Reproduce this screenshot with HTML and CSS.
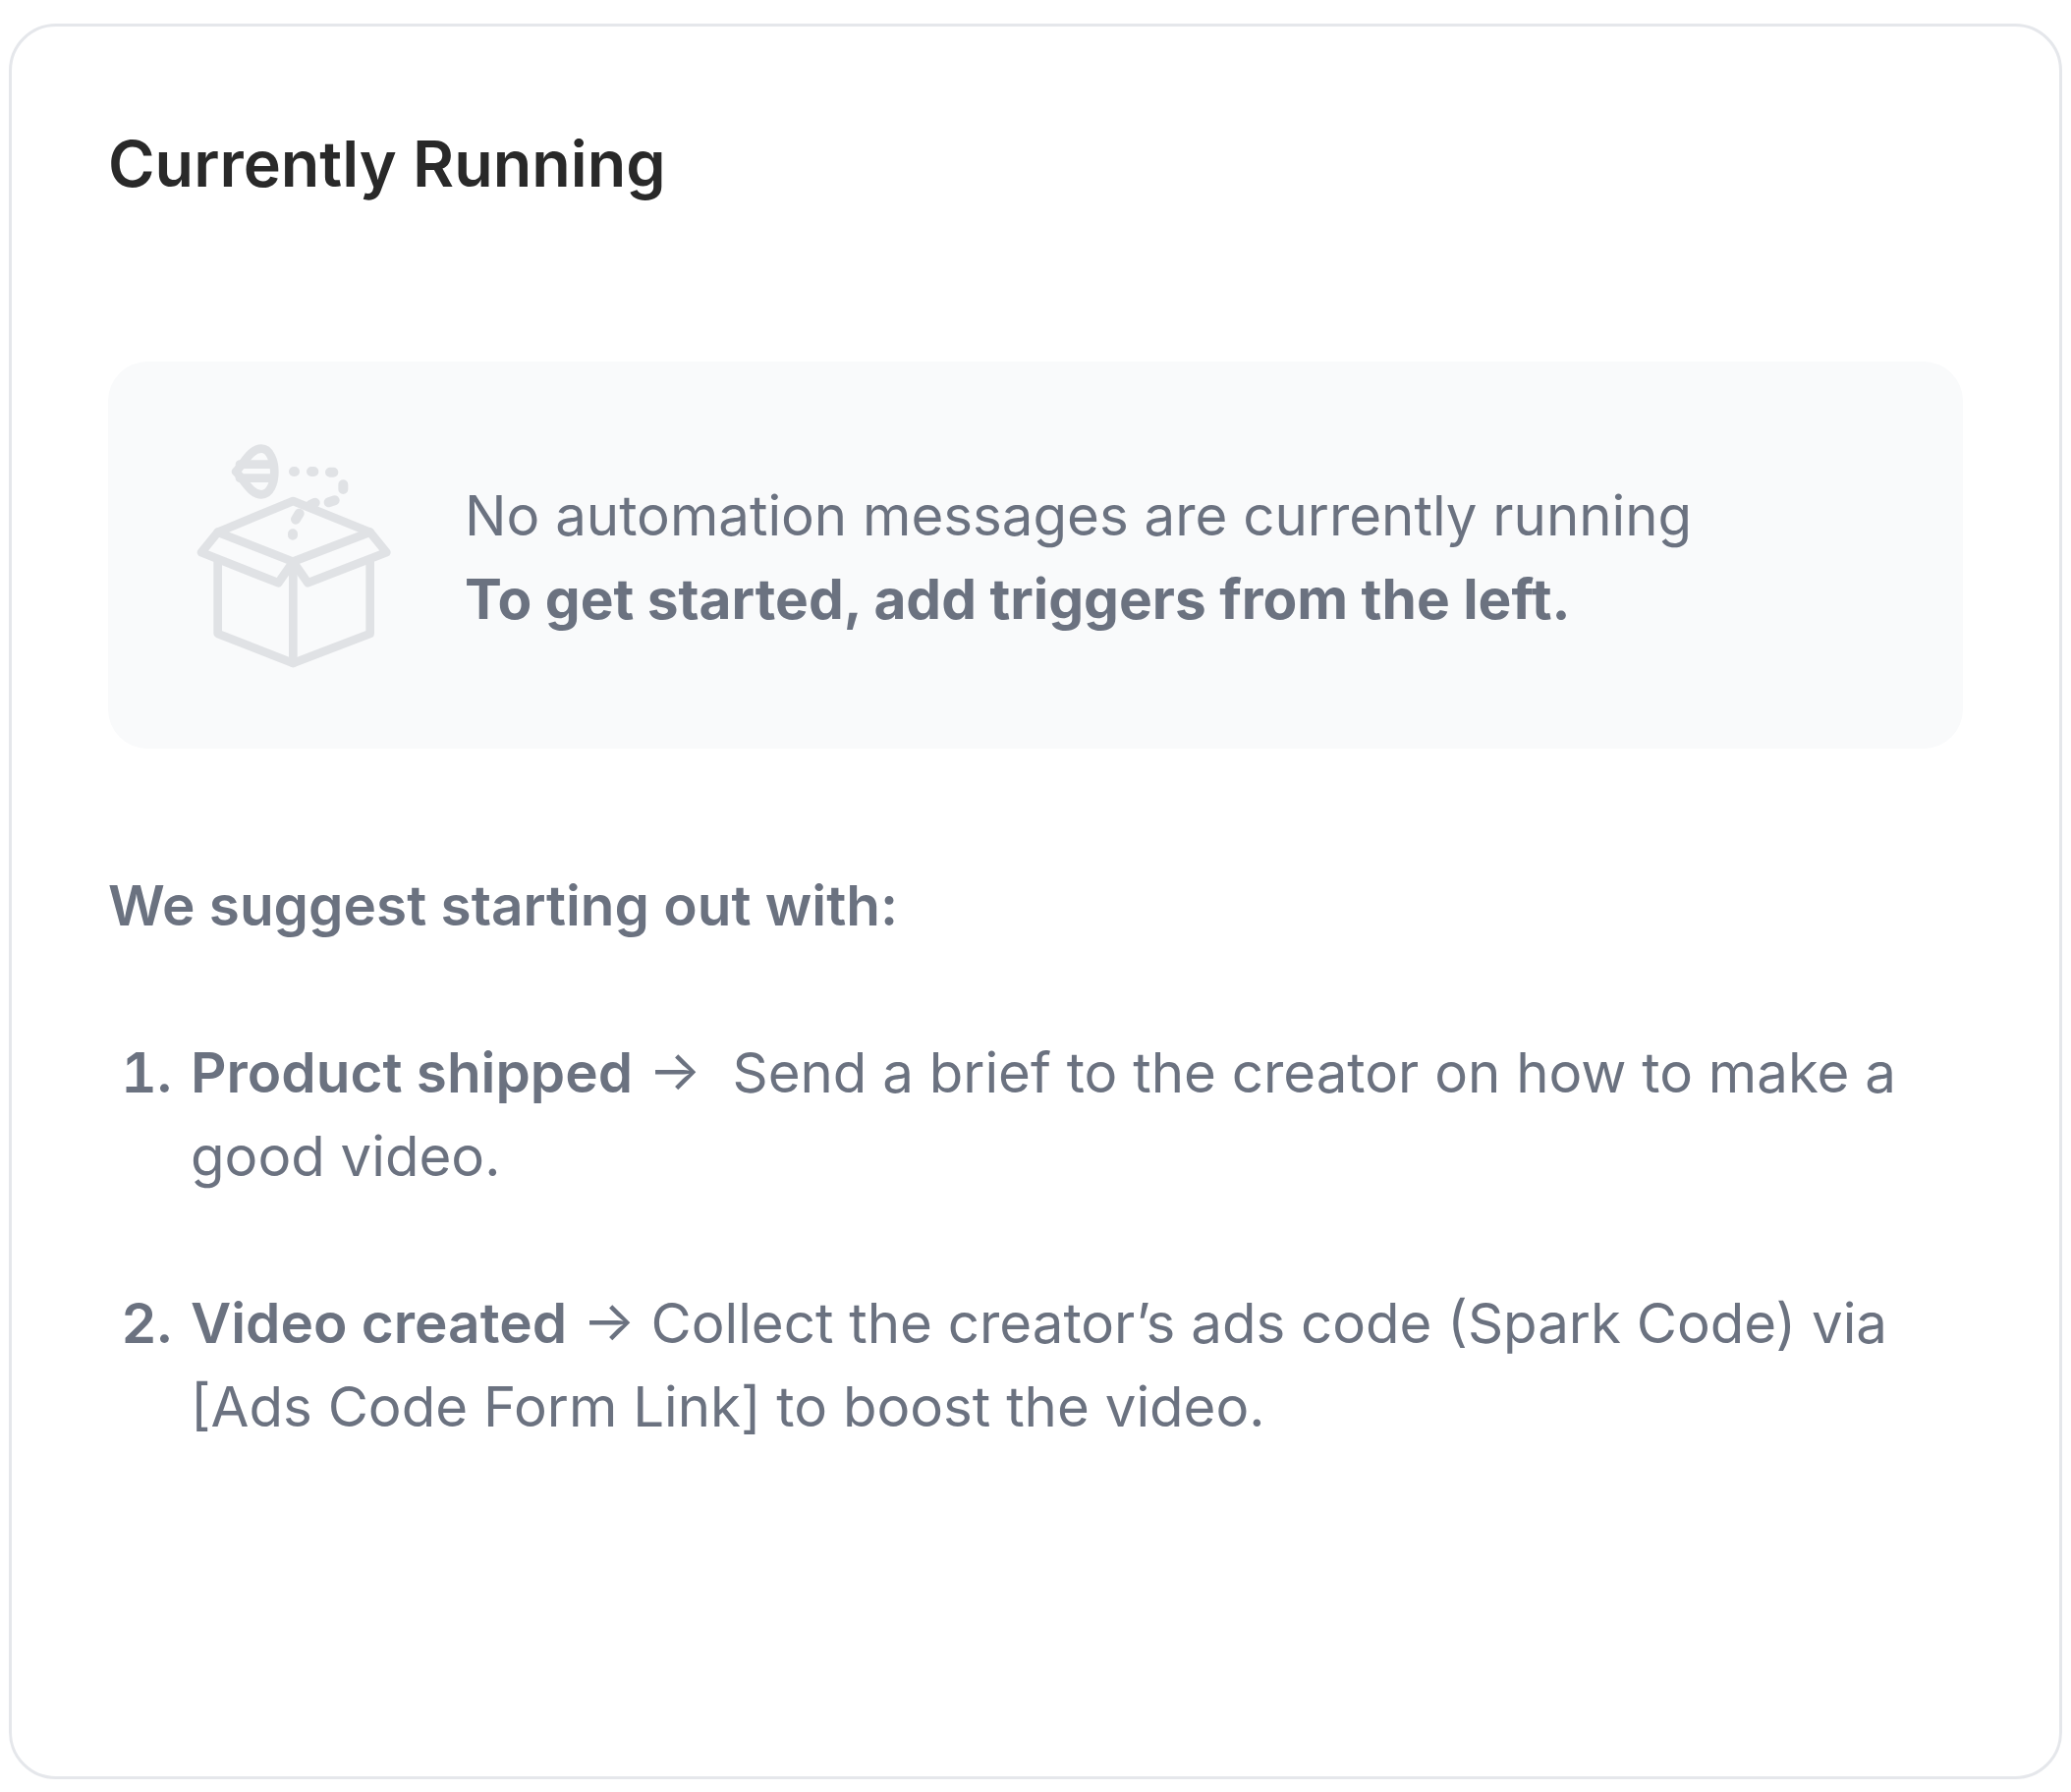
FILE: index.html
```html
<!DOCTYPE html>
<html lang="en">
<head>
  <meta charset="UTF-8">
  <title>Currently Running</title>
  <link rel="stylesheet" href="styles.css">
</head>
<body>
  <div class="card">
    <h2 class="card-title">Currently Running</h2>

    <div class="empty-box">
      <svg class="empty-icon" viewBox="0 0 720 810" fill="none" stroke="#e0e2e5" stroke-width="26" stroke-linejoin="round" stroke-linecap="round">
        <path d="M355 240L590 335L355 425L125 335Z"/>
        <path d="M125 335L75 397L310 490L355 425L400 490L640 397L590 335"/>
        <path d="M125 425V645L355 735L590 645V425"/>
        <path d="M355 425V735"/>
        <path d="M258 80C285 80 298 120 298 150C298 185 285 220 258 220C225 220 205 175 180 150C205 125 225 80 258 80Z"/>
        <path d="M192 128H290M192 170H290"/>
        <path class="empty-icon-dots" d="M357 150H360M411 150H418M468 152H478M508 190V204M482 238L464 244M422 245L408 252M374 278L363 296M354 340V344"/>
      </svg>
      <div class="empty-text">
        <p>No automation messages are currently running</p>
        <p><b class="empty-strong">To get started, add triggers from the left.</b></p>
      </div>
    </div>

    <p class="suggest">We suggest starting out with:</p>

    <ol class="steps">
      <li class="step">
        <span class="step-num">1.</span>
        <span class="step-text"><b>Product shipped</b> →&nbsp; Send a brief to the creator on how to make a good video.</span>
      </li>
      <li class="step">
        <span class="step-num">2.</span>
        <span class="step-text"><b>Video created</b> → Collect the creator’s ads code (Spark Code) via [Ads Code Form Link] to boost the video.</span>
      </li>
    </ol>
  </div>
</body>
</html>
```

FILE: styles.css
```css
body {
  margin: 0;
  background-color: #fff;
  font-family: Inter, "Liberation Sans", sans-serif;
  color: #6b7280;
}
p {
  margin: 0;
}
b {
  font-size: 56.7px;
  font-weight: 600;
}
.card {
  margin: 24px 9px 13px;
  height: 1787px;
  box-sizing: border-box;
  padding: 95px 98px 0;
  border: 3px solid #e5e7eb;
  border-radius: 48px;
}
.card-title {
  margin: 0;
  font-size: 64.6px;
  line-height: 90px;
  font-weight: 600;
  color: #292929;
}
.empty-box {
  display: flex;
  align-items: center;
  gap: 53px;
  height: 394px;
  box-sizing: border-box;
  margin-top: 156px;
  padding-left: 70px;
  background-color: #f9fafb;
  border-radius: 40px;
}
.empty-icon {
  width: 240px;
  height: 270px;
  flex: none;
}
.empty-icon-dots {
  stroke-width: 30;
}
.empty-text {
  padding-top: 4px;
  font-size: 56.4px;
  line-height: 85px;
}
.empty-strong {
  font-size: 56.8px;
  font-weight: 700;
}
.suggest {
  margin-top: 117px;
  font-size: 56.7px;
  line-height: 85px;
  font-weight: 600;
}
.steps {
  margin: 85px 0 0;
  padding: 0;
  list-style: none;
  font-size: 56.4px;
  line-height: 85px;
}
.step {
  display: flex;
  margin-bottom: 85px;
}
.step-num {
  flex: none;
  box-sizing: border-box;
  width: 84px;
  padding-right: 19px;
  text-align: right;
  font-weight: 600;
  font-variant-numeric: tabular-nums;
}
```
